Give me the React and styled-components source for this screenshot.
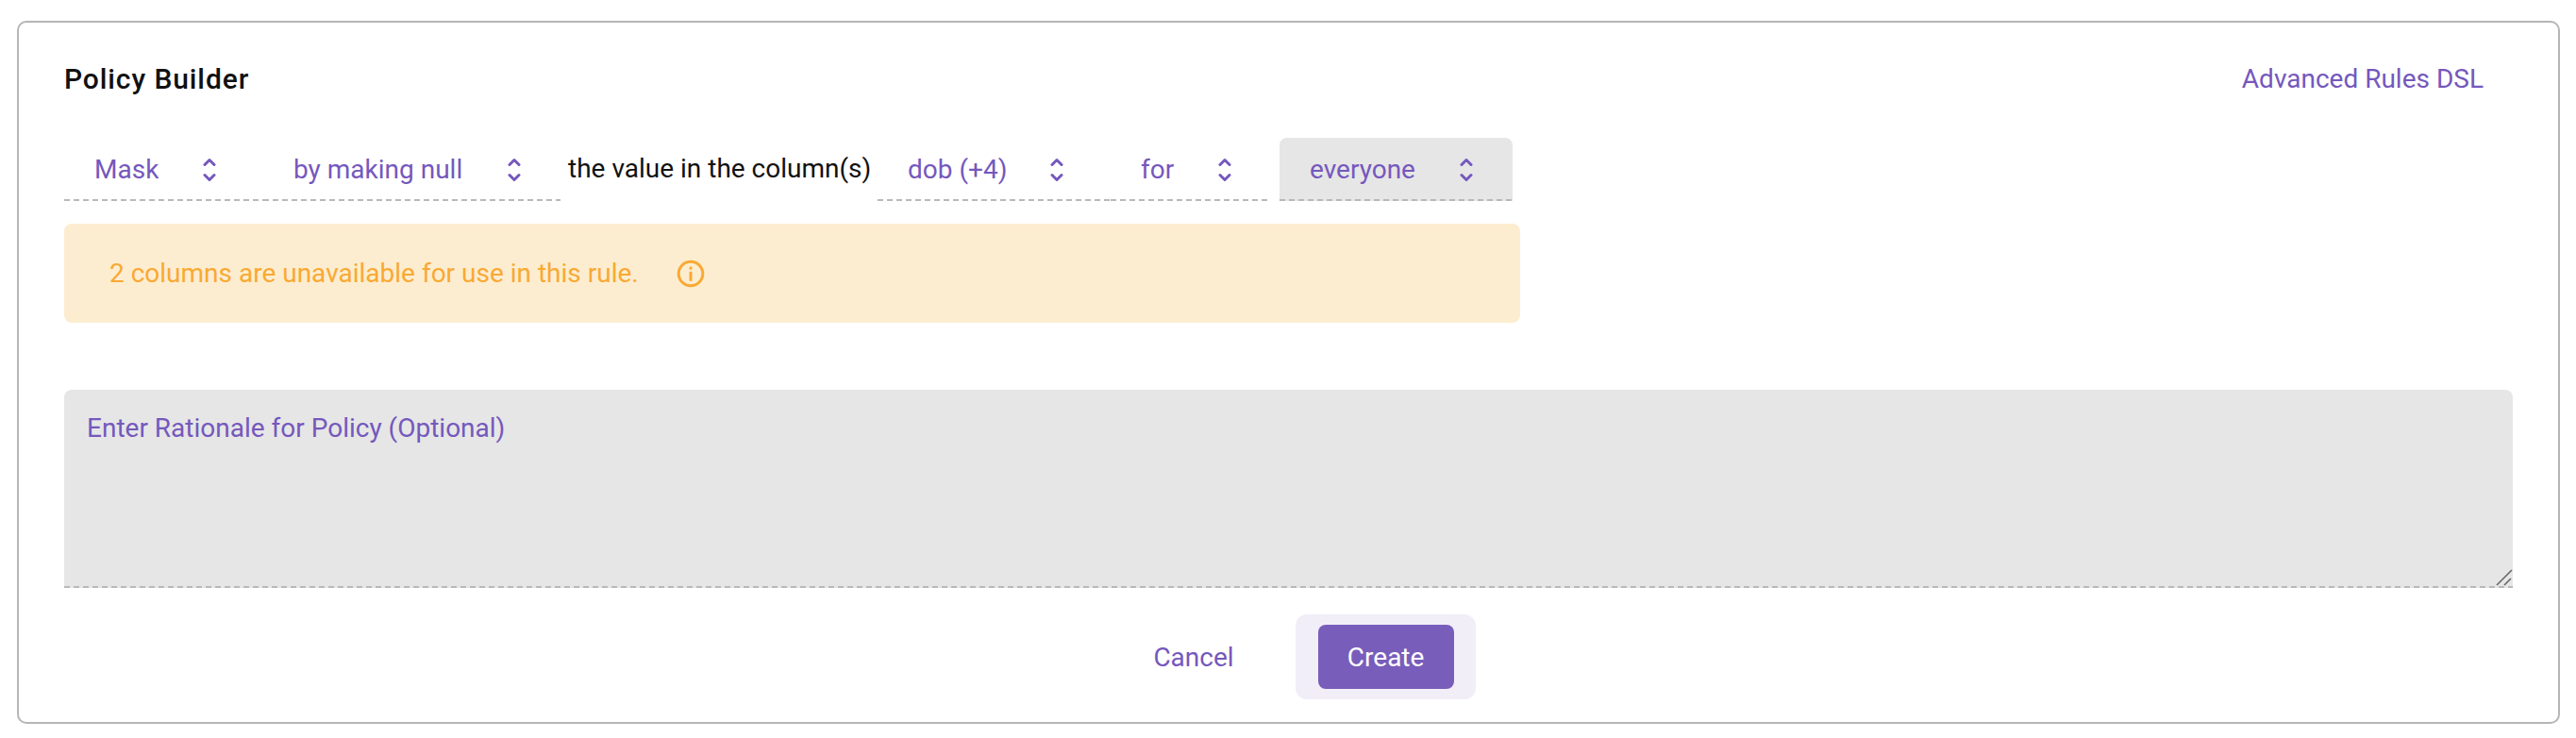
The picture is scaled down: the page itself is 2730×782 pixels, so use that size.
import React from "react";
import styled, { createGlobalStyle, css } from "styled-components";

const purple = "#7558bd";

const Global = createGlobalStyle`
  html, body { margin: 0; padding: 0; background: #fff; }
  body { font-family: Roboto, "Liberation Sans", sans-serif; }
`;

const dashedBottom = css`
  background-image: linear-gradient(to right, #b8b8b8 6px, transparent 6px);
  background-position: left bottom;
  background-size: 10px 2px;
  background-repeat: repeat-x;
`;

const Page = styled.div`
  padding: 22px 17px 15px 18px;
`;

const Card = styled.section`
  box-sizing: border-box;
  height: 745px;
  border: 2px solid #b6b6b6;
  border-radius: 10px;
  padding: 38px 48px 24px 48px;
  display: flex;
  flex-direction: column;
`;

const Header = styled.header`
  display: flex;
  justify-content: space-between;
  align-items: center;
  height: 44px;
`;

const Title = styled.h2`
  margin: 0;
  font-size: 30px;
  letter-spacing: 0.9px;
  font-weight: 500;
  color: #111;
`;

const DslLink = styled.a`
  font-size: 28px;
  color: ${purple};
  margin-right: 31px;
`;

const BuilderRow = styled.div`
  display: flex;
  align-items: stretch;
  height: 68px;
  margin-top: 40px;
`;

const Select = styled.div`
  box-sizing: border-box;
  width: ${(p) => p.$w}px;
  margin-right: ${(p) => p.$gap ?? 0}px;
  padding: 2px ${(p) => p.$pr ?? 42}px 2px 32px;
  display: flex;
  align-items: center;
  justify-content: space-between;
  font-size: 28px;
  color: ${purple};
  background-color: ${(p) => (p.$active ? "#e6e6e6" : "transparent")};
  ${dashedBottom}
  border-radius: ${(p) => (p.$active ? "8px 8px 0 0" : "0")};
`;

const RowText = styled.span`
  align-self: center;
  font-size: 28px;
  color: #111;
  width: 336px;
  padding-left: 8px;
  box-sizing: border-box;
  white-space: nowrap;
  margin-top: -2px;
`;

const Warning = styled.div`
  box-sizing: border-box;
  width: 1543px;
  height: 105px;
  margin-top: 24px;
  padding-left: 48px;
  display: flex;
  align-items: center;
  gap: 40px;
  background: #fdedd0;
  border-radius: 8px;
  font-size: 28px;
  color: #f9a932;
`;

const RationaleWrap = styled.div`
  position: relative;
  margin-top: 71px;
`;

const Rationale = styled.textarea`
  display: block;
  box-sizing: border-box;
  width: 100%;
  height: 210px;
  padding: 24px 24px;
  border: none;
  border-radius: 8px 8px 0 0;
  background-color: #e6e6e6;
  ${dashedBottom}
  font-family: inherit;
  font-size: 28px;
  outline: none;
  resize: none;
  &::placeholder { color: ${purple}; opacity: 1; }
`;

const Grip = styled.svg`
  position: absolute;
  right: 0;
  bottom: 2px;
  pointer-events: none;
`;

const Footer = styled.div`
  display: flex;
  justify-content: center;
  align-items: center;
  margin-top: 28px;
  gap: 65px;
  padding-left: 55px;
`;

const CancelButton = styled.button`
  border: none;
  background: none;
  padding: 0;
  font: inherit;
  font-size: 28px;
  color: ${purple};
`;

const FocusRing = styled.div`
  padding: 11px 23px 11px 24px;
  background: #f1eef8;
  border-radius: 12px;
  display: flex;
`;

const CreateButton = styled.button`
  width: 144px;
  height: 68px;
  border: none;
  border-radius: 8px;
  background: #795dbb;
  color: #fff;
  font: inherit;
  font-size: 28px;
`;

const Chevrons = () => (
  <svg width="14" height="26" viewBox="0 0 14 26" fill="none" stroke={purple} strokeWidth="3" strokeLinecap="round" strokeLinejoin="round">
    <path d="M2 7.5 L7 2.5 L12 7.5" />
    <path d="M2 18.5 L7 23.5 L12 18.5" />
  </svg>
);

const Info = () => (
  <svg width="30" height="30" viewBox="0 0 30 30" fill="none" stroke="#f9a932" strokeWidth="3" strokeLinecap="round">
    <circle cx="15" cy="15" r="12.8" />
    <path d="M15 14 V21.5" />
    <path d="M15 8.8 V9.2" />
  </svg>
);

export default function App() {
  return (
    <Page>
      <Global />
      <Card>
        <Header>
          <Title>Policy Builder</Title>
          <DslLink>Advanced Rules DSL</DslLink>
        </Header>
        <BuilderRow>
          <Select $w={211} $pr={50}>Mask<Chevrons /></Select>
          <Select $w={315}>by making null<Chevrons /></Select>
          <RowText>the value in the column(s)</RowText>
          <Select $w={247} $pr={50}>dob (+4)<Chevrons /></Select>
          <Select $w={170} $gap={9}>for<Chevrons /></Select>
          <Select $w={247} $active>everyone<Chevrons /></Select>
        </BuilderRow>
        <Warning>
          2 columns are unavailable for use in this rule.
          <Info />
        </Warning>
        <RationaleWrap>
          <Rationale placeholder="Enter Rationale for Policy (Optional)" />
          <Grip width="18" height="18" viewBox="0 0 18 18" fill="none" stroke="#666" strokeWidth="1.6">
            <path d="M1 17 L17 1" />
            <path d="M9 17 L16 10" />
          </Grip>
        </RationaleWrap>
        <Footer>
          <CancelButton>Cancel</CancelButton>
          <FocusRing>
            <CreateButton>Create</CreateButton>
          </FocusRing>
        </Footer>
      </Card>
    </Page>
  );
}
